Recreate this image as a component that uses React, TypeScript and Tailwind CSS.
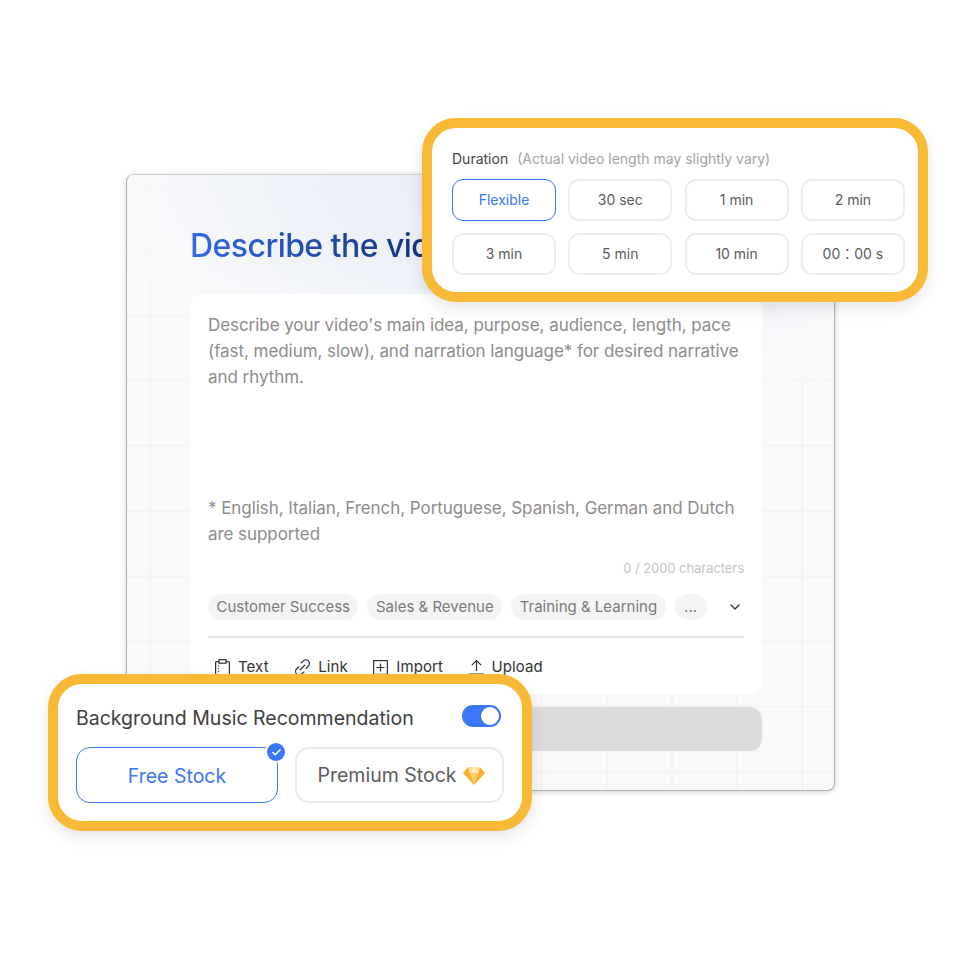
import React from 'react';
import { ChevronDown, Check } from 'lucide-react';

const durations = ['Flexible', '30 sec', '1 min', '2 min', '3 min', '5 min', '10 min', '00：00 s'];
const chips = ['Customer Success', 'Sales & Revenue', 'Training & Learning'];

function ClipboardIcon() {
  return (
    <svg width="15" height="17" viewBox="0 0 15 17" fill="none" stroke="#333" strokeWidth="1.2">
      <rect x="0.6" y="2.6" width="13.8" height="13.8" rx="1" />
      <rect x="4" y="0.6" width="7" height="3.6" fill="#fff" />
      <path d="M3.5 6.5v8" strokeDasharray="1 1.6" />
    </svg>
  );
}

function LinkIcon() {
  return (
    <svg width="17" height="17" viewBox="0 0 18 18" fill="none" stroke="#333" strokeWidth="1.25" strokeLinecap="round">
      <path d="M7.5 4.2 9.8 2.2a3.7 3.7 0 0 1 5.5 5.2l-2.4 2.4" />
      <path d="M10.5 13.8 8.2 15.8a3.7 3.7 0 0 1-5.5-5.2l2.4-2.4" />
      <path d="M11.4 6.6 6.6 11.4" />
    </svg>
  );
}

function ImportIcon() {
  return (
    <svg width="15" height="15" viewBox="0 0 15 15" fill="none" stroke="#333" strokeWidth="1.2">
      <rect x="0.6" y="0.6" width="13.8" height="13.8" />
      <path d="M7.5 3.5v8M3.5 7.5h8" />
    </svg>
  );
}

function UploadIcon() {
  return (
    <svg width="15" height="16" viewBox="0 0 15 16" fill="none" stroke="#333" strokeWidth="1.2">
      <path d="M7.5 12V1.5M2.8 6.2 7.5 1.5l4.7 4.7M0 15.2h15" />
    </svg>
  );
}

function GemIcon() {
  return (
    <svg width="22" height="18" viewBox="0 0 22 18">
      <path d="M5 0h12l5 6-11 12L0 6z" fill="#F9B02A" />
      <path d="M6.5 6h9L11 17.5z" fill="#FFCB66" />
      <path d="M5 0h12l-1.5 6h-9z" fill="#FFDD99" />
      <path d="M11 0l4.5 6h-9z" fill="#FFEBC4" />
    </svg>
  );
}

export default function App() {
  return (
    <div className="relative w-[960px] h-[960px] bg-white pt-[174px] pl-[126px] font-['Inter','Noto_Sans_CJK_TC',sans-serif] overflow-hidden">
      {/* Main card */}
      <div className="w-[709px] h-[617px] rounded-lg border border-[#b4b4b4] border-t-[#d4d4d4] shadow-[0_1px_5px_rgba(0,0,0,0.2)] overflow-hidden bg-[#f9f9f9]">
        <div className="h-full pt-[52px] pl-[63px] bg-[radial-gradient(ellipse_75%_42%_at_60%_0%,#e6eaf6_0%,rgba(236,240,248,0.92)_45%,rgba(246,248,251,0.75)_75%,rgba(249,249,249,0)_100%),linear-gradient(to_right,#efefef_1px,transparent_1px),linear-gradient(to_bottom,#efefef_1px,transparent_1px)] bg-[size:100%_100%,65.2px_65.2px,65.2px_65.2px] bg-[position:0_0,23px_9.6px,23px_9.6px]">
          <h1 className="h-[38px] text-[32px] leading-[38px] font-[550] tracking-[-0.55px] whitespace-nowrap bg-[linear-gradient(90deg,#3269e8_0%,#12306f_38%)] bg-clip-text text-transparent">
            Describe the video
          </h1>
          <div className="mt-[29px] w-[572px] h-[400px] bg-white rounded-xl px-[18px] pt-[18px] text-[#8c8c8c] text-[17px] leading-[26px] tracking-[-0.06px]">
            <p className="h-[156px]">
              Describe your video's main idea, purpose, audience, length, pace (fast, medium, slow), and narration language* for desired narrative and rhythm.
            </p>
            <p className="mt-[27px]">* English, Italian, French, Portuguese, Spanish, German and Dutch are supported</p>
            <p className="mt-[13px] text-right text-[13px] leading-[16px] text-[#c4c4c4]">0 / 2000 characters</p>
            <div className="mt-[18px] flex items-center gap-[9px] tracking-normal">
              {chips.map(chip => (
                <span key={chip} className="h-[26px] px-[8.5px] rounded-full bg-[#f4f4f4] text-[15px] leading-[26px] text-[#7a7a7a] whitespace-nowrap">
                  {chip}
                </span>
              ))}
              <span className="h-[26px] w-[32px] text-center rounded-full bg-[#f4f4f4] text-[15px] leading-[26px] text-[#7a7a7a]">...</span>
              <ChevronDown size={16} strokeWidth={2} className="ml-auto mr-[1px] text-[#333]" />
            </div>
            <div className="mt-[16px] border-t-2 border-[#e5e5e5]" />
            <div className="mt-[18px] pl-[7px] flex items-center gap-[25.5px] text-[15px] leading-[22px] tracking-[0.1px] text-[#333]">
              <span className="flex items-center gap-[8px]"><ClipboardIcon />Text</span>
              <span className="flex items-center gap-[7px]"><LinkIcon />Link</span>
              <span className="flex items-center gap-[8px]"><ImportIcon />Import</span>
              <span className="flex items-center gap-[8px]"><UploadIcon />Upload</span>
            </div>
          </div>
          <div className="mt-[13px] w-[572px] h-[44px] rounded-xl bg-[#dcdcdc]" />
        </div>
      </div>

      {/* Duration popover */}
      <div className="absolute left-[422px] top-[118px] w-[506px] h-[184px] rounded-[34px] border-[10px] border-[#f7b936] bg-white shadow-[0_6px_16px_rgba(0,0,0,0.10)] pl-[20px] pt-[23px]">
        <div className="flex items-baseline gap-[9px] text-[14px] leading-[16px]">
          <span className="text-[#444]">Duration</span>
          <span className="text-[#a3a3a3]">(Actual video length may slightly vary)</span>
        </div>
        <div className="mt-[12px] grid grid-cols-[104px_104px_104px_104px] gap-x-[12.3px] gap-y-[12px]">
          {durations.map((d, i) => (
            <div
              key={d}
              className={
                i === 0
                  ? 'h-[42px] pb-[1px] flex items-center justify-center rounded-[11px] border border-[#3b76f6] text-[14px] text-[#3b76f6]'
                  : 'h-[42px] pb-[1px] flex items-center justify-center rounded-[11px] border-2 border-[#eeeeee] text-[14px] text-[#5c5c5c]'
              }
            >
              {d}
            </div>
          ))}
        </div>
      </div>

      {/* Music popover */}
      <div className="absolute left-[48px] top-[674px] w-[484px] h-[157px] rounded-[34px] border-[10px] border-[#f7b936] bg-white shadow-[0_6px_16px_rgba(0,0,0,0.10)] pl-[18px] pr-[18px] pt-[21px]">
        <div className="flex items-start justify-between pr-[3px]">
          <span className="text-[19.5px] leading-[26px] text-[#404040] whitespace-nowrap">Background Music Recommendation</span>
          <span className="flex items-center justify-end w-[39px] h-[22px] rounded-full bg-[#3b76f6] pr-[2px]">
            <span className="w-[18px] h-[18px] rounded-full bg-white" />
          </span>
        </div>
        <div className="mt-[16px] flex gap-[17px]">
          <div className="relative w-[202px] h-[56px] pt-[3px] flex items-center justify-center rounded-[14px] border border-[#3b76f6] text-[19.5px] text-[#3b76f6]">
            Free Stock
            <span className="absolute -top-[5px] -right-[8px] w-[18px] h-[18px] rounded-full bg-[#3b76f6] flex items-center justify-center ring-2 ring-white">
              <Check size={11} strokeWidth={3.5} className="text-white" />
            </span>
          </div>
          <div className="w-[209px] h-[56px] pt-[2px] pl-[4px] flex items-center justify-center gap-[7px] rounded-[14px] border-2 border-[#ebebeb] text-[19.5px] text-[#5c5c5c]">
            Premium Stock
            <GemIcon />
          </div>
        </div>
      </div>
    </div>
  );
}
